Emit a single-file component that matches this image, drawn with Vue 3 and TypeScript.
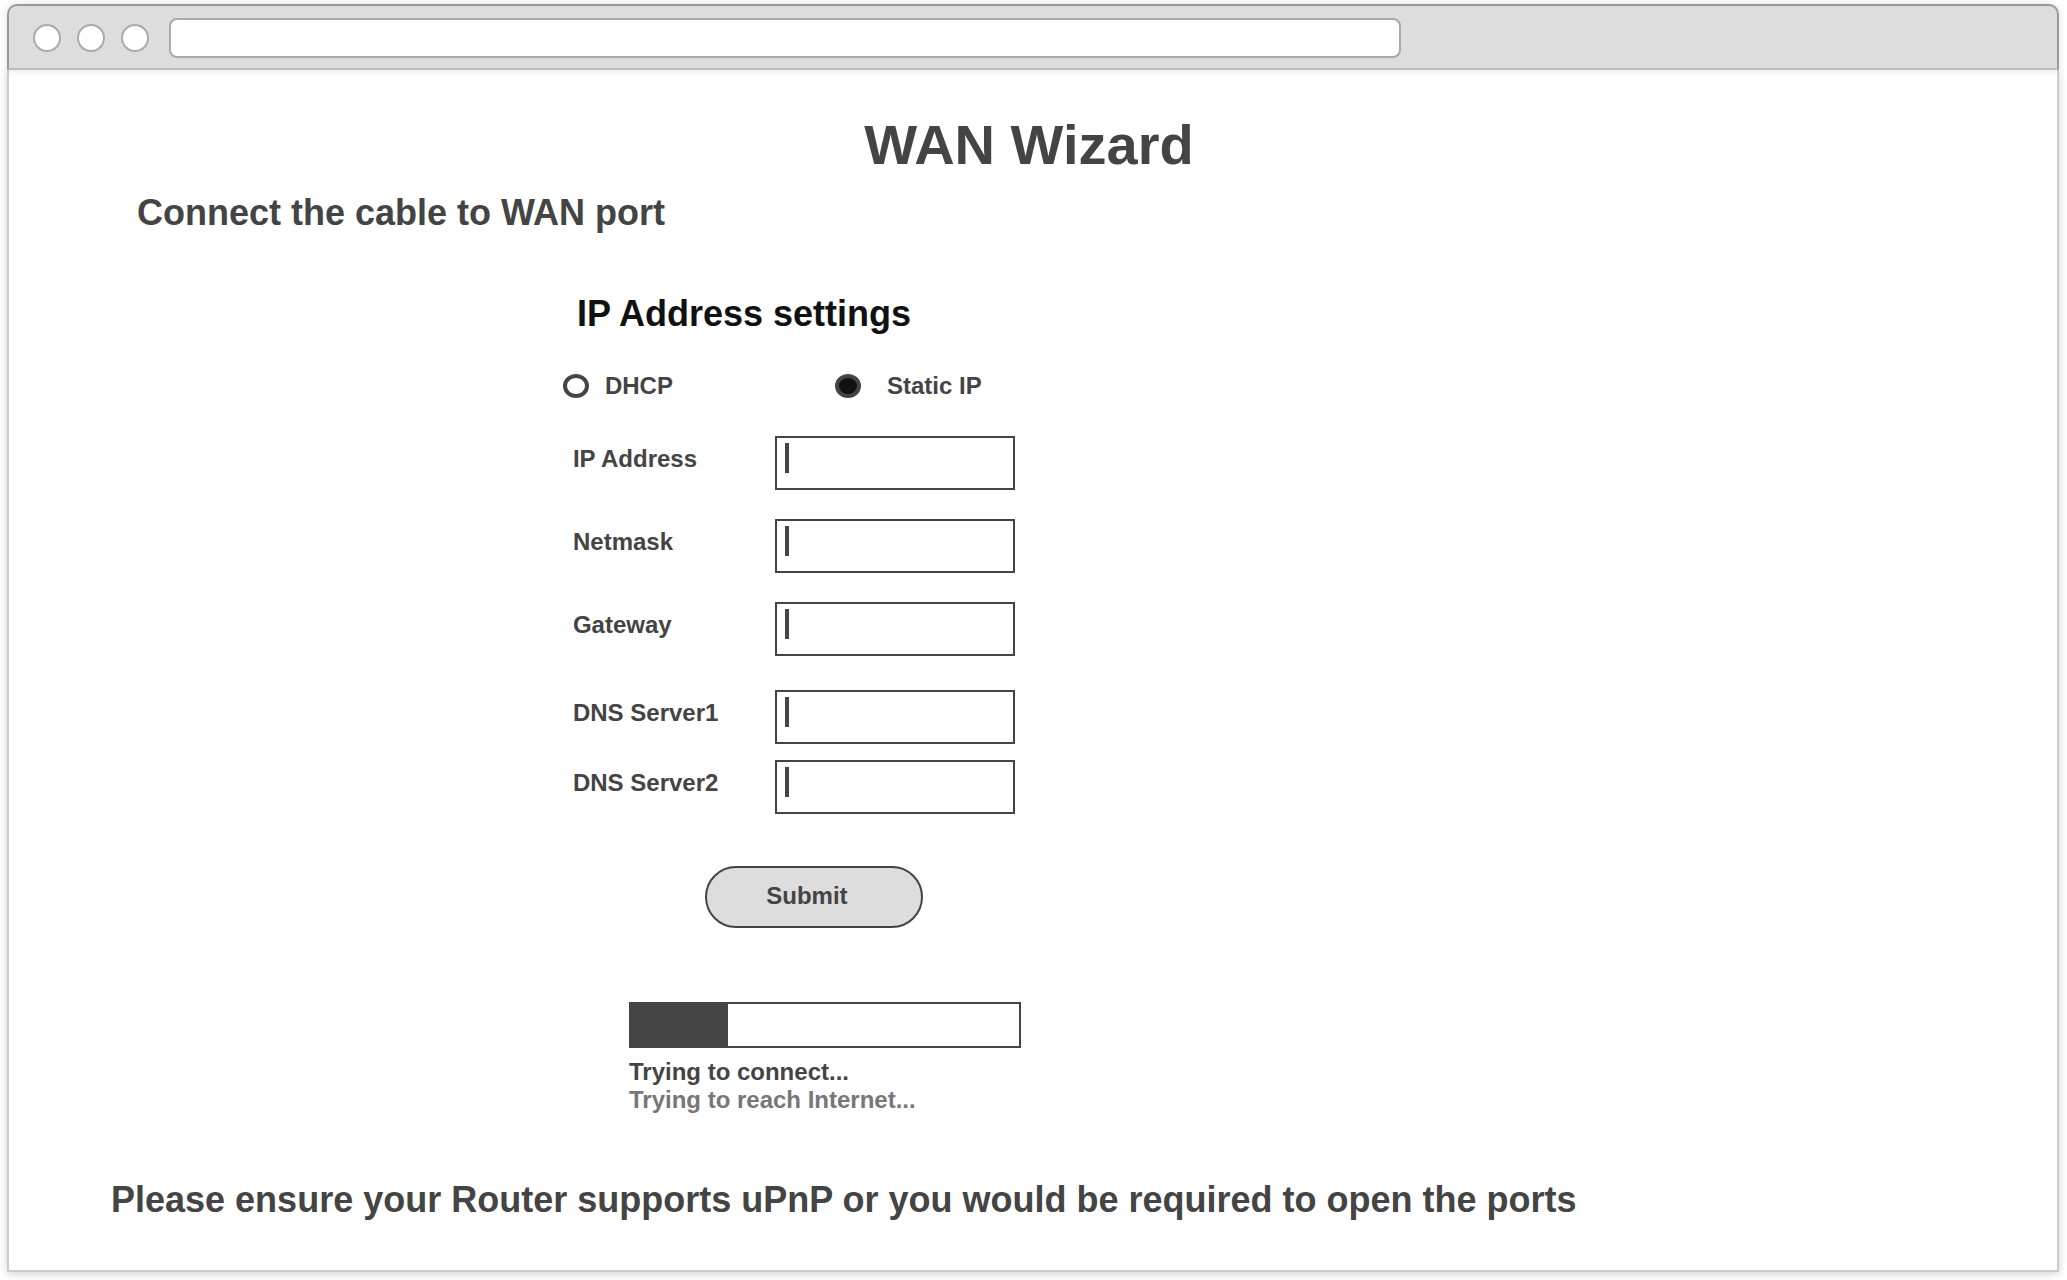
<script setup lang="ts">
import { ref } from 'vue'

interface Field {
  id: string
  label: string
}

const addressFields: Field[] = [
  { id: 'ip', label: 'IP Address' },
  { id: 'netmask', label: 'Netmask' },
  { id: 'gateway', label: 'Gateway' },
]

const dnsFields: Field[] = [
  { id: 'dns1', label: 'DNS Server1' },
  { id: 'dns2', label: 'DNS Server2' },
]

const fieldGroups: Field[][] = [addressFields, dnsFields]

const mode = ref<'dhcp' | 'static'>('static')
const url = ref('')
const values = ref<Record<string, string>>({ ip: '', netmask: '', gateway: '', dns1: '', dns2: '' })
const progress = ref(25)
</script>

<template>
  <div class="browser">
    <header class="bar">
      <button type="button" class="dot" aria-label="Close"></button>
      <button type="button" class="dot" aria-label="Minimize"></button>
      <button type="button" class="dot" aria-label="Maximize"></button>
      <input v-model="url" class="url" type="text" aria-label="Address" />
    </header>

    <main class="page">
      <h1>WAN Wizard</h1>
      <h2 class="lead">Connect the cable to WAN port</h2>

      <form class="settings" @submit.prevent>
        <h2 class="heading">IP Address settings</h2>

        <div class="modes">
          <div class="mode dhcp">
            <input id="dhcp" v-model="mode" type="radio" name="mode" value="dhcp" />
            <label for="dhcp">DHCP</label>
          </div>
          <div class="mode static">
            <input id="static" v-model="mode" type="radio" name="mode" value="static" />
            <label for="static">Static IP</label>
          </div>
        </div>

        <div v-for="(group, i) in fieldGroups" :key="i" class="group">
          <div v-for="field in group" :key="field.id" class="row">
            <label :for="field.id">{{ field.label }}</label>
            <input :id="field.id" v-model="values[field.id]" type="text" />
          </div>
        </div>

        <button type="submit" class="submit">Submit</button>

        <div class="status">
          <progress :value="progress" max="100" aria-label="Connection progress"></progress>
          <p>Trying to connect...</p>
          <p class="pending">Trying to reach Internet...</p>
        </div>
      </form>

      <h2 class="note">Please ensure your Router supports uPnP or you would be required to open the ports</h2>
    </main>
  </div>
</template>

<style>
body {
  margin: 0;
  background: #fff;
}

#app {
  display: flow-root;
}
</style>

<style scoped>
* {
  box-sizing: border-box;
}

.browser {
  display: flex;
  flex-direction: column;
  min-height: calc(100vh - 12px);
  margin: 4px 8px 8px 7px;
  font: bold 24px/28px "Liberation Sans", Arial, sans-serif;
  color: #444;
}

.bar {
  position: relative;
  display: flex;
  align-items: center;
  padding: 12px 4px 10px 24px;
  gap: 16px;
  border: 2px solid #999;
  border-bottom-color: #bbb;
  border-radius: 10px 10px 0 0;
  background: #ddd;
  box-shadow: 0 0 8px rgba(0, 0, 0, 0.12);
}

.dot {
  flex: none;
  width: 28px;
  height: 28px;
  padding: 0;
  border: 2px solid #aaa;
  border-radius: 50%;
  background: #fff;
}

.url {
  width: 61%;
  height: 40px;
  margin-left: 4px;
  padding: 0 12px;
  border: 2px solid #aaa;
  border-radius: 8px;
  background: #fff;
  font: 20px "Liberation Sans", Arial, sans-serif;
  color: #444;
}

.page {
  flex: 1;
  padding: 43px 0 49px;
  border: 2px solid #ccc;
  border-top: 0;
  background: #fff;
  box-shadow: 0 2px 8px rgba(0, 0, 0, 0.18);
}

h1,
h2,
p {
  margin: 0;
}

h1 {
  padding-right: 8px;
  font-size: 56px;
  line-height: 64px;
  text-align: center;
}

h2 {
  font-size: 36px;
  line-height: 40px;
}

.lead {
  margin: 16px 0 0 128px;
}

.settings {
  margin: 61px 0 0 27%;
}

.heading {
  padding-left: 15px;
  color: #111;
}

.modes {
  display: flex;
  margin-top: 38px;
  padding-left: 1px;
}

.mode {
  display: flex;
  align-items: center;
}

.dhcp {
  width: 272px;
  gap: 16px;
}

.static {
  gap: 26px;
}

.mode input {
  appearance: none;
  width: 26px;
  height: 24px;
  margin: 0;
  border: 4px solid #444;
  border-radius: 50%;
  background: #fff;
}

.mode input:checked {
  background: #111;
}

.group {
  display: flex;
  flex-direction: column;
  gap: 29px;
  margin-top: 36px;
}

.group + .group {
  gap: 16px;
  margin-top: 34px;
}

.row {
  display: flex;
}

.row label {
  width: 213px;
  padding: 9px 0 0 11px;
}

.row input {
  width: 240px;
  height: 54px;
  padding: 0 20px;
  border: 2px solid #444;
  border-radius: 0;
  background: linear-gradient(#444, #444) no-repeat 8px 5px / 4px 30px #fff;
  font: inherit;
  color: inherit;
}

.submit {
  display: block;
  width: 218px;
  height: 62px;
  margin: 52px 0 0 143px;
  padding: 0 14px 2px 0;
  border: 2px solid #444;
  border-radius: 31px;
  background: #ddd;
  font: inherit;
  color: inherit;
}

.status {
  margin: 74px 0 0 67px;
}

progress {
  display: block;
  appearance: none;
  width: 392px;
  height: 46px;
  margin-bottom: 10px;
  border: 2px solid #444;
  background: #fff;
}

progress::-webkit-progress-bar {
  background: #fff;
}

progress::-webkit-progress-value {
  background: #444;
}

.pending {
  color: #777;
}

.note {
  margin: 66px 0 0 102px;
}
</style>
